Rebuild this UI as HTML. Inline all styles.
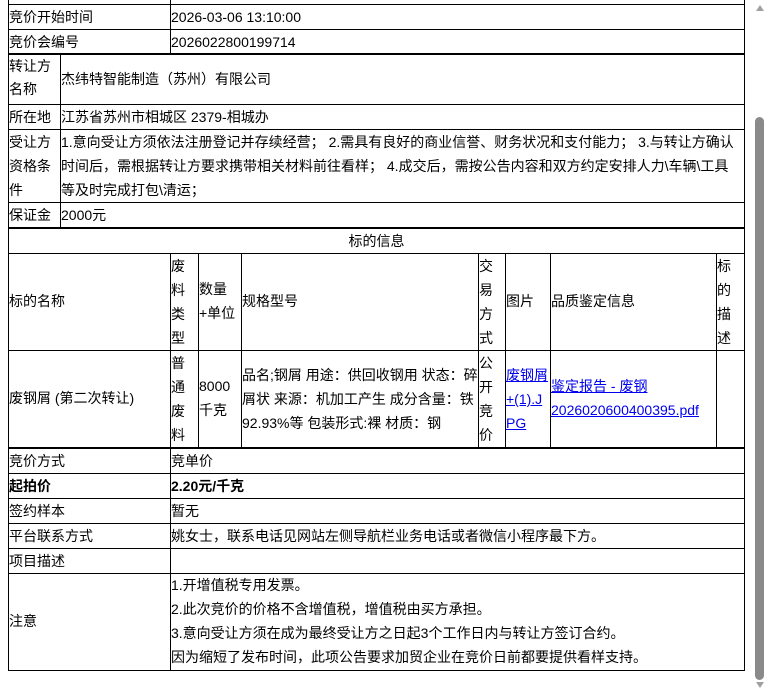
<!DOCTYPE html>
<html><head><meta charset="utf-8"><style>
*{margin:0;padding:0;box-sizing:border-box}
body{width:767px;height:693px;overflow:hidden;background:#fff;position:relative;font-family:"Liberation Sans","Noto Sans CJK SC",sans-serif;font-size:14px;color:#000}
.h{position:absolute;height:1px;background:#000}
.v{position:absolute;width:1px;background:#000}
.t{position:absolute;white-space:nowrap;line-height:24px}
a{color:#00e;text-decoration:underline}
b{font-weight:bold}
</style></head><body>
<div class="h" style="left:8px;width:737px;top:4px"></div>
<div class="h" style="left:8px;width:737px;top:29px"></div>
<div class="h" style="left:8px;width:737px;top:53px;height:2px"></div>
<div class="h" style="left:8px;width:737px;top:104px"></div>
<div class="h" style="left:8px;width:737px;top:129px"></div>
<div class="h" style="left:8px;width:737px;top:202px"></div>
<div class="h" style="left:8px;width:737px;top:227px;height:2px"></div>
<div class="h" style="left:8px;width:737px;top:253px"></div>
<div class="h" style="left:8px;width:737px;top:350px"></div>
<div class="h" style="left:8px;width:737px;top:447px;height:2px"></div>
<div class="h" style="left:8px;width:737px;top:473px"></div>
<div class="h" style="left:8px;width:737px;top:498px"></div>
<div class="h" style="left:8px;width:737px;top:523px"></div>
<div class="h" style="left:8px;width:737px;top:548px"></div>
<div class="h" style="left:8px;width:737px;top:573px"></div>
<div class="h" style="left:8px;width:737px;top:670px"></div>
<div class="v" style="left:8px;top:0;height:671px"></div>
<div class="v" style="left:744px;top:0;height:671px"></div>
<div class="v" style="left:170px;top:0;height:54px"></div>
<div class="v" style="left:60px;top:54px;height:174px"></div>
<div class="v" style="left:170px;top:253px;height:195px"></div>
<div class="v" style="left:198px;top:253px;height:195px"></div>
<div class="v" style="left:241px;top:253px;height:195px"></div>
<div class="v" style="left:478px;top:253px;height:195px"></div>
<div class="v" style="left:505px;top:253px;height:195px"></div>
<div class="v" style="left:550px;top:253px;height:195px"></div>
<div class="v" style="left:716px;top:253px;height:195px"></div>
<div class="v" style="left:170px;top:448px;height:223px"></div>

<div class="t" style="left:9px;top:5px">竞价开始时间</div>
<div class="t" style="left:171px;top:5px">2026-03-06 13:10:00</div>
<div class="t" style="left:9px;top:30px">竞价会编号</div>
<div class="t" style="left:171px;top:30px">2026022800199714</div>
<div class="t" style="left:9px;top:55px;line-height:23px">转让方<br>名称</div>
<div class="t" style="left:61px;top:67px">杰纬特智能制造（苏州）有限公司</div>
<div class="t" style="left:9px;top:105px">所在地</div>
<div class="t" style="left:61px;top:105px">江苏省苏州市相城区 2379-相城办</div>
<div class="t" style="left:9px;top:130px">受让方<br>资格条<br>件</div>
<div class="t" style="left:61px;top:130px">1.意向受让方须依法注册登记并存续经营； 2.需具有良好的商业信誉、财务状况和支付能力； 3.与转让方确认<br>时间后，需根据转让方要求携带相关材料前往看样； 4.成交后，需按公告内容和双方约定安排人力\车辆\工具<br>等及时完成打包\清运；</div>
<div class="t" style="left:9px;top:203px">保证金</div>
<div class="t" style="left:61px;top:203px">2000元</div>
<div class="t" style="left:9px;top:229px;width:735px;text-align:center">标的信息</div>

<div class="t" style="left:9px;top:289px">标的名称</div>
<div class="t" style="left:171px;top:254px">废<br>料<br>类<br>型</div>
<div class="t" style="left:199px;top:277px">数量<br>+单位</div>
<div class="t" style="left:242px;top:289px">规格型号</div>
<div class="t" style="left:479px;top:254px">交<br>易<br>方<br>式</div>
<div class="t" style="left:506px;top:289px">图片</div>
<div class="t" style="left:551px;top:289px">品质鉴定信息</div>
<div class="t" style="left:717px;top:254px">标<br>的<br>描<br>述</div>

<div class="t" style="left:9px;top:386px">废钢屑 (第二次转让)</div>
<div class="t" style="left:171px;top:351px">普<br>通<br>废<br>料</div>
<div class="t" style="left:199px;top:374px">8000<br>千克</div>
<div class="t" style="left:242px;top:363px">品名;钢屑 用途：供回收钢用 状态：碎<br>屑状 来源：机加工产生 成分含量：铁<br>92.93%等 包装形式:裸 材质：钢</div>
<div class="t" style="left:479px;top:351px">公<br>开<br>竞<br>价</div>
<div class="t" style="left:506px;top:363px"><a>废钢屑</a><br><a>+(1).J</a><br><a>PG</a></div>
<div class="t" style="left:551px;top:374px"><a>鉴定报告 - 废钢</a><br><a>2026020600400395.pdf</a></div>

<div class="t" style="left:9px;top:449px">竞价方式</div>
<div class="t" style="left:171px;top:449px">竞单价</div>
<div class="t" style="left:9px;top:474px"><b>起拍价</b></div>
<div class="t" style="left:171px;top:474px"><b>2.20元/千克</b></div>
<div class="t" style="left:9px;top:499px">签约样本</div>
<div class="t" style="left:171px;top:499px">暂无</div>
<div class="t" style="left:9px;top:524px">平台联系方式</div>
<div class="t" style="left:171px;top:524px">姚女士，联系电话见网站左侧导航栏业务电话或者微信小程序最下方。</div>
<div class="t" style="left:9px;top:549px">项目描述</div>
<div class="t" style="left:9px;top:609px">注意</div>
<div class="t" style="left:171px;top:573px">1.开增值税专用发票。<br>2.此次竞价的价格不含增值税，增值税由买方承担。<br>3.意向受让方须在成为最终受让方之日起3个工作日内与转让方签订合约。<br>因为缩短了发布时间，此项公告要求加贸企业在竞价日前都要提供看样支持。</div>

<div style="position:absolute;left:752px;top:0;width:15px;height:693px;background:#fff"></div>
<div style="position:absolute;left:755px;top:117px;width:9px;height:563px;background:#8a8a8a;border-radius:5px"></div>
<div style="position:absolute;left:756px;top:5px;width:0;height:0;border-left:4px solid transparent;border-right:4px solid transparent;border-bottom:6px solid #a0a0a0"></div>
<div style="position:absolute;left:756px;top:682px;width:0;height:0;border-left:4px solid transparent;border-right:4px solid transparent;border-top:6px solid #a0a0a0"></div>
</body></html>
